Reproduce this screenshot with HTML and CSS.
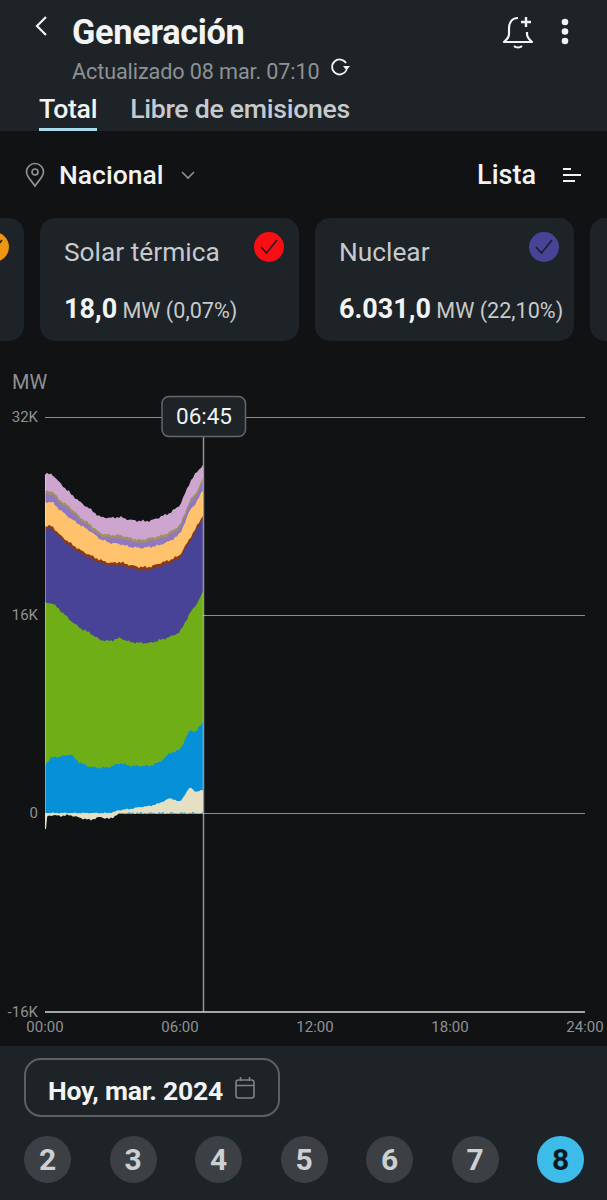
FILE: index.html
```html
<!DOCTYPE html>
<html lang="es">
<head>
    <meta charset="UTF-8">
    <meta name="viewport" content="width=device-width, initial-scale=1.0">
    <title>Generación</title>
    <link rel="stylesheet" href="styles.css">
</head>
<body>

<div class="topbar">
    <div class="title-row">
        <svg class="back-icon" width="20" height="30" viewBox="0 0 20 30"><path d="M14 5 L5 14 L14 23" fill="none" stroke="#f2f3f3" stroke-width="2.2"/></svg>
        <h1 class="title">Generación</h1>
        <svg class="bell-icon" width="34" height="36" viewBox="0 0 34 36">
            <path d="M17 4 C10 4 8 10 8 15 V20 C8 24 5 26 3 28 H31 C29 26 26 24 26 20 V18" fill="none" stroke="#f2f3f3" stroke-width="2.2" stroke-linejoin="round"/>
            <path d="M13 32 C15 34 19 34 21 32" fill="none" stroke="#f2f3f3" stroke-width="2.2"/>
            <path d="M25 3 V13 M20 8 H30" fill="none" stroke="#f2f3f3" stroke-width="2.4"/>
        </svg>
        <svg class="dots-icon" width="10" height="30" viewBox="0 0 10 30">
            <circle cx="5" cy="5" r="3.3" fill="#f2f3f3"/>
            <circle cx="5" cy="14.5" r="3.3" fill="#f2f3f3"/>
            <circle cx="5" cy="24" r="3.3" fill="#f2f3f3"/>
        </svg>
    </div>
    <div class="updated-row">
        <span class="updated">Actualizado 08 mar. 07:10</span>
        <svg class="refresh-icon" width="22" height="22" viewBox="0 0 22 22">
            <path d="M17 7 A7.5 7.5 0 1 0 17.5 14" fill="none" stroke="#f2f3f3" stroke-width="1.8"/>
            <path d="M14 10 H21 L17.5 14.5 Z" fill="#f2f3f3"/>
        </svg>
    </div>
    <div class="tabs">
        <a class="tab active" href="#">Total</a>
        <a class="tab" href="#">Libre de emisiones</a>
    </div>
</div>

<div class="filters">
    <svg class="pin-icon" width="22" height="26" viewBox="0 0 22 26">
        <path d="M11 24 C7 18 2.500 14.500 2.500 10 A8.500 8.500 0 0 1 19.500 10 C19.500 14.500 15 18 11 24 Z" fill="none" stroke="#8d9195" stroke-width="1.7"/>
        <circle cx="11" cy="10" r="3" fill="none" stroke="#8d9195" stroke-width="1.7"/>
    </svg>
    <span class="region">Nacional</span>
    <svg class="chevron-icon" width="16" height="10" viewBox="0 0 16 10"><path d="M2 2 L8 8 L14 2" fill="none" stroke="#8d9195" stroke-width="1.6"/></svg>
    <span class="list-label">Lista</span>
    <svg class="sort-icon" width="20" height="16" viewBox="0 0 20 16"><path d="M1 2 H9 M1 8 H19 M1 14 H13" fill="none" stroke="#f2f3f3" stroke-width="1.8"/></svg>
</div>

<div class="cards">
    <div class="card">
        <div class="card-head">
            <span class="card-name"></span>
            <span class="check check-orange"><svg width="20" height="18" viewBox="0 0 20 18"><path d="M2 9 L7.500 15 L18 2" fill="none" stroke="#1b1f22" stroke-width="1.6"/></svg></span>
        </div>
    </div>
    <div class="card">
        <div class="card-head">
            <span class="card-name">Solar térmica</span>
            <span class="check check-red"><svg width="20" height="18" viewBox="0 0 20 18"><path d="M2 9 L7.500 15 L18 2" fill="none" stroke="#1b1f22" stroke-width="1.6"/></svg></span>
        </div>
        <div class="card-value"><b>18,0</b> <span>MW (0,07%)</span></div>
    </div>
    <div class="card">
        <div class="card-head">
            <span class="card-name">Nuclear</span>
            <span class="check check-navy"><svg width="20" height="18" viewBox="0 0 20 18"><path d="M2 9 L7.500 15 L18 2" fill="none" stroke="#1b1f22" stroke-width="1.6"/></svg></span>
        </div>
        <div class="card-value"><b>6.031,0</b> <span>MW (22,10%)</span></div>
    </div>
    <div class="card"></div>
</div>

<div class="chart">
    <svg id="chart" width="607" height="705" viewBox="0 341 607 705">
        <text class="unit" x="12" y="389">MW</text>

        <path class="grid" d="M45 417.500 H585 M45 615.500 H585 M45 813.500 H585"/>
        <path class="grid-base" d="M45 1012 H585"/>

        <g id="layers"></g>
        <path class="edge" d="M45.500 474 V813"/>
        <path class="cursor" d="M203.500 437 V1012"/>

        <text class="tick" x="38" y="422" text-anchor="end">32K</text>
        <text class="tick" x="38" y="620" text-anchor="end">16K</text>
        <text class="tick" x="38" y="818" text-anchor="end">0</text>
        <text class="tick" x="38" y="1017" text-anchor="end">-16K</text>

        <text class="tick" x="45" y="1032" text-anchor="middle">00:00</text>
        <text class="tick" x="180" y="1032" text-anchor="middle">06:00</text>
        <text class="tick" x="315" y="1032" text-anchor="middle">12:00</text>
        <text class="tick" x="450" y="1032" text-anchor="middle">18:00</text>
        <text class="tick" x="585" y="1032" text-anchor="middle">24:00</text>

        <rect class="tooltip-box" x="162" y="396.500" width="83.500" height="40" rx="7"/>
        <text class="tooltip-text" x="204" y="424" text-anchor="middle">06:45</text>
    </svg>
</div>

<div class="datebar">
    <button class="date-btn">
        <span class="date-text">Hoy, mar. 2024</span>
        <svg width="22" height="24" viewBox="0 0 22 24">
            <rect x="2" y="4" width="18" height="18" rx="2.500" fill="none" stroke="#7d8286" stroke-width="1.6"/>
            <path d="M2 9.500 H20 M6.500 1 V5 M15.500 1 V5" fill="none" stroke="#7d8286" stroke-width="1.6"/>
        </svg>
    </button>
    <div class="days">
        <span class="day">2</span>
        <span class="day">3</span>
        <span class="day">4</span>
        <span class="day">5</span>
        <span class="day">6</span>
        <span class="day">7</span>
        <span class="day today">8</span>
    </div>
</div>

<script src="chart.js"></script>
</body>
</html>
```

FILE: styles.css
```css
* {
    box-sizing: border-box;
}

body {
    font-family: Roboto, "Noto Sans", sans-serif;
    margin: 0;
    width: 607px;
    height: 1200px;
    overflow: hidden;
    background-color: #111213;
    color: #f2f3f3;
}

/* top bar */
.topbar {
    height: 131px;
    background-color: #1e2327;
    padding: 0 32px 0 32px;
    display: flex;
    flex-direction: column;
}

.title-row {
    display: flex;
    align-items: center;
    height: 56px;
    padding-top: 8px;
}

.back-icon {
    margin-bottom: 10px;
    margin-right: 20px;
}

.title {
    margin: 0;
    font-size: 34.3px;
    font-weight: 700;
    letter-spacing: -0.3px;
    margin-right: auto;
}

.bell-icon {
    margin-right: 25px;
}

.dots-icon {
    margin-right: 5px;
}

.updated-row {
    display: flex;
    align-items: center;
    height: 30px;
    padding-left: 40px;
}

.updated {
    font-size: 21.6px;
    letter-spacing: -0.1px;
    color: #8d9195;
}

.refresh-icon {
    margin-left: 9px;
    margin-bottom: 8px;
}

.tabs {
    display: flex;
    gap: 33px;
    padding-left: 7px;
    height: 45px;
}

.tab {
    font-size: 26.7px;
    font-weight: 500;
    letter-spacing: -0.3px;
    color: #c6cacc;
    text-decoration: none;
    padding-top: 7px;
}

.tab.active {
    color: #f2f3f3;
    border-bottom: 3px solid #a8dcea;
}

/* region filter */
.filters {
    height: 87px;
    display: flex;
    align-items: center;
    padding: 0 25px 0 24px;
}

.region {
    font-size: 26.5px;
    font-weight: 500;
    margin-left: 13px;
}

.chevron-icon {
    margin-left: 16px;
    margin-right: auto;
}

.list-label {
    font-size: 27px;
    font-weight: 500;
}

.sort-icon {
    margin-left: 26px;
}

/* source cards */
.cards {
    display: flex;
    gap: 16px;
    margin-left: -235px;
    height: 123px;
}

.card {
    flex: 0 0 259px;
    min-width: 0;
    height: 123px;
    background-color: #1e2327;
    border-radius: 15px;
    padding: 14px 15px 0 24px;
}

.card-head {
    display: flex;
    justify-content: space-between;
    height: 46px;
}

.card-name {
    font-size: 26.3px;
    color: #c6cacc;
    padding-top: 5px;
}

.check {
    width: 30px;
    height: 30px;
    border-radius: 50%;
    display: flex;
    align-items: center;
    justify-content: center;
}

.check-orange {
    background-color: #f0950f;
}

.check-red {
    background-color: #fb0d14;
}

.check-navy {
    background-color: #494397;
}

.card-value {
    margin-top: 15px;
    white-space: nowrap;
    font-size: 21.6px;
    color: #c6cacc;
}

.card-value b {
    font-size: 27px;
    font-weight: 700;
    color: #f2f3f3;
}

/* chart */
.chart {
    height: 705px;
}

.chart svg {
    display: block;
}

.unit {
    font-size: 20px;
    fill: #8d9195;
}

.tick {
    font-size: 15px;
    fill: #8d9195;
}

.grid {
    stroke: #8a8c8e;
    stroke-width: 1;
    fill: none;
}

.grid-base {
    stroke: #a3a5a7;
    stroke-width: 2;
    fill: none;
}

.edge {
    stroke: rgba(255, 255, 255, 0.35);
    stroke-width: 1;
    fill: none;
}

.cursor {
    stroke: rgba(235, 235, 235, 0.6);
    stroke-width: 1.500;
    fill: none;
}

.tooltip-box {
    fill: #1e2327;
    stroke: #62686c;
    stroke-width: 1.500;
}

.tooltip-text {
    font-size: 22.5px;
    fill: #f2f3f3;
}

/* date picker */
.datebar {
    height: 154px;
    background-color: #1e2327;
    padding: 12px 23px 0 24px;
}

.date-btn {
    width: 256px;
    height: 59px;
    display: flex;
    align-items: center;
    gap: 11px;
    padding: 0 0 0 22px;
    background: none;
    border: 2px solid #5b6064;
    border-radius: 17px;
    color: #f2f3f3;
    font-family: inherit;
    font-size: 26.5px;
    font-weight: 700;
    letter-spacing: -0.2px;
    white-space: nowrap;
}

.date-text {
    padding-top: 5px;
}

.days {
    display: flex;
    justify-content: space-between;
    margin-top: 19px;
}

.day {
    width: 47px;
    height: 47px;
    border-radius: 50%;
    background-color: #3c4044;
    color: #cdd0d2;
    font-size: 30px;
    font-weight: 700;
    display: flex;
    align-items: center;
    justify-content: center;
}

.day.today {
    background-color: #3dbbe9;
    color: #0b1a22;
}
```

FILE: chart.js
```js
// x positions of the samples, then the top edge of each stacked layer
const xs = [45, 52, 60, 70, 80, 90, 100, 110, 120, 130, 140, 150, 160, 170, 180, 190, 196, 203];

const layers = [
    { color: '#cda5cf', seed: 0.4, top: [474, 474, 483, 493, 502, 509, 517, 518, 517, 520, 521, 521, 517, 513, 505, 482, 473, 465] },
    { color: '#a0915f', seed: 1.3, top: [491, 491, 500, 507, 517, 524, 533, 535, 535, 538, 540, 538, 536, 532, 525, 500, 493, 478] },
    { color: '#8f78c0', seed: 1.3, top: [494, 494, 503, 510, 520, 527, 536, 538, 538, 541, 543, 541, 539, 535, 528, 503, 496, 481] },
    { color: '#fec36c', seed: 2.2, top: [502, 502, 510, 518, 525, 531, 539, 543, 544, 547, 548, 547, 545, 541, 534, 510, 503, 490] },
    { color: '#8a3a14', seed: 3.1, top: [526, 526, 535, 543, 550, 555, 560, 563, 562, 565, 567, 567, 563, 560, 555, 538, 528, 515] },
    { color: '#494397', seed: 3.1, top: [529, 529, 538, 546, 553, 558, 563, 566, 565, 568, 570, 570, 566, 563, 558, 541, 531, 518] },
    { color: '#6fae16', seed: 4.5, top: [603, 603, 610, 620, 628, 633, 640, 641, 638, 642, 643, 643, 640, 637, 632, 613, 605, 592] },
    { color: '#0590d8', seed: 5.6, top: [765, 757, 757, 754, 763, 767, 768, 767, 763, 766, 766, 766, 762, 753, 750, 730, 732, 722] }
];

// cream layer crosses zero, so it has its own bottom edge
const creamTop = [813, 813, 813, 813, 813, 813, 813, 813, 810, 809, 807, 806, 803, 798, 802, 787, 792, 790];
const creamBottom = [817, 815, 816, 815, 818, 820, 817, 819, 813, 813, 813, 813, 813, 813, 813, 813, 813, 813];

function sample(values, x) {
    let i = 0;
    while (i < xs.length - 2 && xs[i + 1] < x) i++;
    const t = (x - xs[i]) / (xs[i + 1] - xs[i]);
    return values[i] + (values[i + 1] - values[i]) * t;
}

function jitter(x, seed) {
    return Math.sin(x * 1.7 + seed) * 0.8 + Math.sin(x * 0.6 + seed * 2) * 0.6;
}

function edge(values, seed, amount) {
    const points = [];
    for (let x = 45; x <= 203; x += 2) {
        points.push(x + ' ' + (sample(values, x) + jitter(x, seed) * amount).toFixed(1));
    }
    return points;
}

const group = document.getElementById('layers');

function addPath(d, color) {
    const path = document.createElementNS('http://www.w3.org/2000/svg', 'path');
    path.setAttribute('d', d);
    path.setAttribute('fill', color);
    group.appendChild(path);
}

layers.forEach((layer) => {
    addPath('M' + edge(layer.top, layer.seed, 1).join(' L') + ' L203 813 L45 813 Z', layer.color);
});

const creamUpper = edge(creamTop, 2.1, 0.5);
const creamLower = edge(creamBottom, 4.2, 0.8).reverse();
addPath('M' + creamUpper.join(' L') + ' L' + creamLower.join(' L') + ' Z', '#e5dfc3');
addPath('M45 813 L47.500 813 L46 829 L45 829 Z', '#e5dfc3');
```
